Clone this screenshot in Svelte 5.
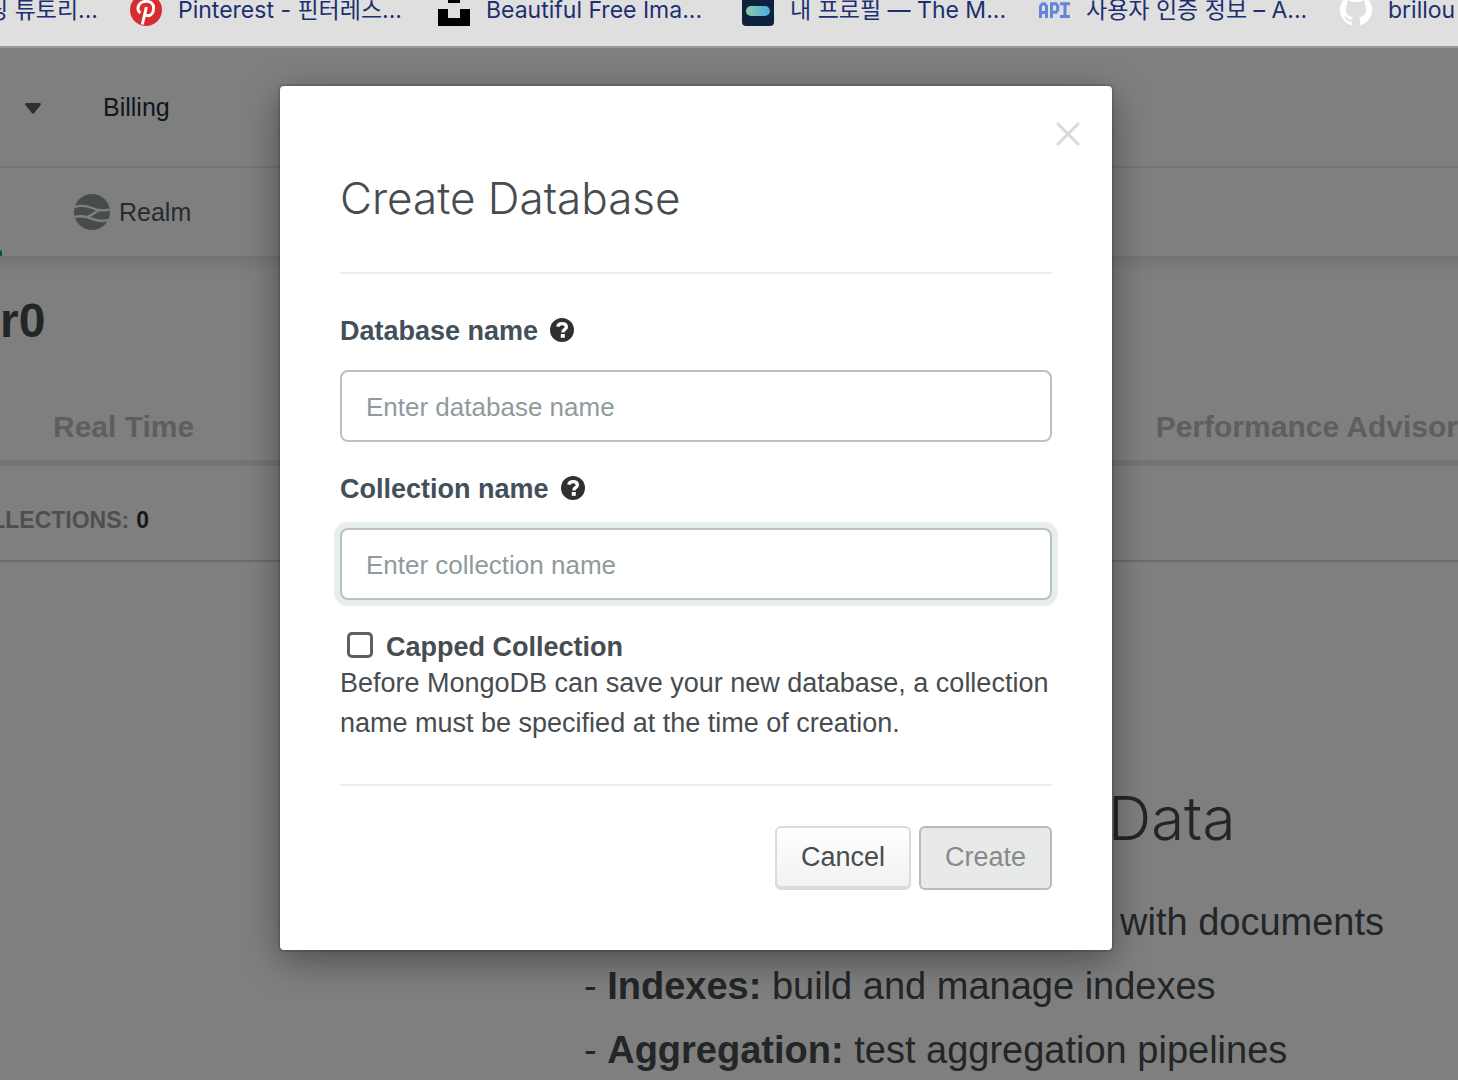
<script>
  let databaseName = $state('');
  let collectionName = $state('');
  let capped = $state(false);
</script>

{#snippet help(label)}
  <button class="help" type="button" aria-label={label}>
    <svg viewBox="0 0 24 24" width="24" height="24" aria-hidden="true">
      <circle cx="12" cy="12" r="12" fill="#2f3131" />
      <path d="M7.700 8.600C8.200 6.600 9.600 5.600 12 5.600c2.800 0 4.300 1.300 4.300 3.300 0 1.500-.8 2.200-1.900 2.900-1 .6-1.500 1-1.500 2.600" fill="none" stroke="#fff" stroke-width="3.400" />
      <rect x="10.800" y="16" width="4" height="3.800" fill="#fff" />
    </svg>
  </button>
{/snippet}

<div class="window">
  <nav class="bookmarks" aria-label="Bookmarks">
    <a class="bookmark tail" href="#tutorial"><span>딩 튜토리...</span></a>
    <a class="bookmark" href="#pinterest">
      <svg viewBox="0 0 32 32" width="32" height="32" aria-hidden="true">
        <circle cx="16" cy="16" r="16" fill="#d82c30" />
        <path d="M10.200 19.100C7.800 16.800 7.400 13.600 9 10.900c1.500-2.500 4.300-3.600 7.200-3.600 4.500 0 7.400 2.800 7.400 6.700 0 4.600-2.500 7.700-5.700 7.700-1.700 0-3-1.100-3-2.600M16.400 13 12.300 30.500" fill="none" stroke="#fff" stroke-width="3" />
      </svg>
      <span>Pinterest - 핀터레스...</span>
    </a>
    <a class="bookmark" href="#images">
      <svg viewBox="0 0 32 32" width="32" height="32" aria-hidden="true">
        <path d="M10 0h12v9H10zM0 15h10v9h12v-9h10v17H0z" fill="#000" />
      </svg>
      <span>Beautiful Free Ima...</span>
    </a>
    <a class="bookmark" href="#profile">
      <svg viewBox="0 0 32 32" width="32" height="32" aria-hidden="true">
        <defs>
          <linearGradient id="pill">
            <stop offset="0" stop-color="#8fcba6" />
            <stop offset="1" stop-color="#42ade0" />
          </linearGradient>
        </defs>
        <rect width="32" height="32" rx="4" fill="#0d233d" />
        <rect x="4" y="12" width="24" height="10" rx="5" fill="url(#pill)" />
      </svg>
      <span>내 프로필 — The M...</span>
    </a>
    <a class="bookmark" href="#credentials">
      <svg viewBox="0 0 32 32" width="32" height="32" aria-hidden="true">
        <g fill="none" stroke="#6485dc" stroke-width="3">
          <path d="M2.500 24V12l2-2.300h2L8.500 12v12M2.500 18.500h6" />
          <path d="M13.500 24V9.700h4.500L19.700 12v4L18 18.300h-4.500" />
          <path d="M22 9.700h10M27 9.700v12.800M22 22.500h10" />
        </g>
      </svg>
      <span>사용자 인증 정보 – A...</span>
    </a>
    <a class="bookmark" href="#brillout">
      <svg viewBox="0 0 16 16" width="32" height="32" aria-hidden="true">
        <path fill="#fff" d="M8 0C3.580 0 0 3.580 0 8c0 3.540 2.290 6.530 5.470 7.590.4.070.55-.17.55-.38 0-.19-.01-.82-.01-1.490-2.010.37-2.530-.49-2.690-.94-.09-.23-.48-.94-.82-1.130-.28-.15-.68-.52-.01-.53.63-.01 1.080.58 1.230.82.72 1.210 1.870.87 2.330.66.070-.52.28-.87.51-1.070-1.780-.2-3.640-.89-3.640-3.950 0-.87.31-1.590.82-2.150-.08-.2-.36-1.020.08-2.120 0 0 .67-.21 2.200.82.64-.18 1.320-.27 2-.27s1.360.09 2 .27c1.530-1.040 2.200-.82 2.200-.82.44 1.100.16 1.920.08 2.120.51.56.82 1.270.82 2.150 0 3.070-1.870 3.750-3.650 3.950.29.25.54.73.54 1.480 0 1.070-.01 1.930-.01 2.200 0 .21.15.46.55.38A8.010 8.010 0 0 0 16 8c0-4.420-3.580-8-8-8z" />
      </svg>
      <span>brillou</span>
    </a>
  </nav>

  <div class="viewport">
    <div class="page">
      <header class="top">
        <button class="caret" type="button" aria-label="Switch context">
          <svg viewBox="0 0 16 11" width="16" height="11" aria-hidden="true">
            <path d="M1.200 0h13.600q1.600.4.800 2L9 10.200q-1 1-2 0L.4 2Q-.4.400 1.200 0z" fill="#576066" />
          </svg>
        </button>
        <a href="#billing">Billing</a>
      </header>

      <nav class="services" aria-label="Services">
        <span class="active-mark"></span>
        <a href="#realm">
          <svg viewBox="0 0 36 36" width="36" height="36" aria-hidden="true">
            <clipPath id="disc"><circle cx="18" cy="18" r="18" /></clipPath>
            <g clip-path="url(#disc)">
              <rect width="36" height="36" fill="#8c9899" />
              <g fill="none" stroke="#fff" stroke-width="2.400">
                <path d="M-1 13.500C6 11 12 11.500 18 14s12 3.500 20 1" />
                <path d="M-1 23.500c7-2.500 12-1.500 18 .8s11 3.700 20 1.200" />
                <path d="M14 22.500c5-1 6.500-5.500 13-6.700" />
              </g>
            </g>
          </svg>
          <span>Realm</span>
        </a>
      </nav>

      <h1 class="cluster"><span>r0</span></h1>

      <nav class="tabs" aria-label="Cluster views">
        <a href="#real-time">Real Time</a>
        <a href="#advisor">Performance Advisor</a>
      </nav>

      <div class="stats"><p>LLECTIONS: <b>0</b></p></div>

      <main class="explore">
        <h2>Data</h2>
        <ul>
          <li class="first">with documents</li>
          <li>- <b>Indexes:</b> build and manage indexes</li>
          <li>- <b>Aggregation:</b> test aggregation pipelines</li>
        </ul>
      </main>
    </div>

    <div class="overlay">
      <div class="modal" role="dialog" aria-modal="true" aria-labelledby="dialog-title">
        <button class="close" type="button" aria-label="Close">
          <svg viewBox="0 0 24 24" width="24" height="24" aria-hidden="true">
            <path d="M1 1l22 22M23 1L1 23" stroke="#d8dad9" stroke-width="3" />
          </svg>
        </button>
        <h2 id="dialog-title">Create Database</h2>
        <form>
          <div class="fields">
            <div class="field">
              <div class="label-row">
                <label for="database">Database name</label>
                {@render help('About database names')}
              </div>
              <input id="database" type="text" placeholder="Enter database name" bind:value={databaseName} />
            </div>
            <div class="field">
              <div class="label-row">
                <label for="collection">Collection name</label>
                {@render help('About collection names')}
              </div>
              <input id="collection" class="focused" type="text" placeholder="Enter collection name" bind:value={collectionName} />
            </div>
            <div>
              <label class="check">
                <input type="checkbox" bind:checked={capped} />
                <span>Capped Collection</span>
              </label>
              <p>Before MongoDB can save your new database, a collection name must be specified at the time of creation.</p>
            </div>
          </div>
          <div class="actions">
            <button class="cancel" type="button">Cancel</button>
            <button class="create" type="submit" disabled>Create</button>
          </div>
        </form>
      </div>
    </div>
  </div>
</div>

<style>
  :global(body) {
    margin: 0;
  }

  .window,
  .window :global(*) {
    box-sizing: border-box;
  }

  .window {
    display: flex;
    flex-direction: column;
    height: 100vh;
    overflow: hidden;
    font-family: "Liberation Sans", Arial, sans-serif;
    color: #464c4f;
  }

  a {
    color: inherit;
    text-decoration: none;
  }

  h1,
  h2,
  p,
  ul {
    margin: 0;
    padding: 0;
  }

  button {
    font: inherit;
    cursor: pointer;
  }

  svg {
    display: block;
    flex: none;
  }

  .bookmarks {
    flex: none;
    display: grid;
    grid-template-columns: 130px 308px 304px 296px 302px 1fr;
    align-content: end;
    height: 48px;
    padding-bottom: 20px;
    overflow: hidden;
    background: #dfdfdf;
    border-bottom: 2px solid #999b9b;
    font: 23px/32px Inter, "Noto Sans CJK KR", sans-serif;
    color: #1c2f70;
  }

  .bookmark {
    display: flex;
    align-items: center;
    gap: 16px;
    height: 32px;
    white-space: nowrap;
  }

  .tail {
    justify-content: flex-end;
    padding-right: 32px;
  }

  .viewport {
    position: relative;
    flex: 1;
    min-height: 0;
    overflow: hidden;
  }

  .page {
    background: #fff;
  }

  .top {
    display: flex;
    align-items: center;
    gap: 62px;
    height: 120px;
    padding-left: 25px;
    border-bottom: 2px solid #e8eded;
    font-size: 25px;
    color: #21313c;
  }

  .caret {
    padding: 2px 0 0;
    border: 0;
    background: none;
  }

  .services {
    display: flex;
    align-items: stretch;
    gap: 72px;
    height: 88px;
    font-size: 25px;
    color: #4d575e;
  }

  .services a {
    display: flex;
    align-items: center;
    gap: 9px;
  }

  .active-mark {
    align-self: flex-end;
    width: 2px;
    height: 6px;
    border-top-right-radius: 2px;
    background: #13aa52;
  }

  .cluster {
    display: flex;
    padding-top: 35px;
    background: linear-gradient(#e6e8ec, #f6f7f8 12px, #fff 24px);
    font-size: 48px;
    line-height: 60px;
  }

  .tabs {
    display: flex;
    justify-content: space-between;
    height: 115px;
    padding: 58px 0 0 53px;
    border-bottom: 6px solid #e7e8e7;
    font-size: 30px;
    line-height: 36px;
    font-weight: bold;
    color: #babebc;
  }

  .stats {
    display: flex;
    align-items: center;
    height: 96px;
    padding-top: 14px;
    border-bottom: 2px solid #d5d8d7;
    font-size: 23px;
    font-weight: bold;
    color: #9d9f9e;
  }

  .stats p {
    display: flex;
    justify-content: flex-end;
    gap: 7px;
    width: 149px;
    white-space: nowrap;
  }

  .stats b {
    color: #303332;
  }

  .explore {
    padding: 216px 0 0 584px;
    font-size: 38px;
    line-height: 64px;
    white-space: nowrap;
  }

  .explore h2 {
    padding-left: 524px;
    font: 300 60px/80px Inter, sans-serif;
  }

  .explore ul {
    padding-top: 32px;
    list-style: none;
  }

  .explore .first {
    padding-left: 536px;
  }

  .overlay {
    position: absolute;
    inset: 0;
    display: flex;
    justify-content: center;
    align-items: flex-start;
    padding: 38px 66px 0 0;
    background: rgba(0, 0, 0, 0.5);
  }

  .modal {
    position: relative;
    flex: 0 1 832px;
    padding: 82px 60px 60px;
    border-radius: 4px;
    background: #fff;
    box-shadow: 0 0 0 2px rgba(0, 0, 0, 0.12), 0 10px 36px rgba(0, 0, 0, 0.4);
    font-size: 27px;
    line-height: 40px;
  }

  .modal h2 {
    padding-bottom: 44px;
    border-bottom: 2px solid #ededed;
    font: 300 44px/60px Inter, sans-serif;
  }

  .close {
    position: absolute;
    top: 36px;
    right: 32px;
    padding: 0;
    border: 0;
    background: none;
  }

  .fields {
    display: flex;
    flex-direction: column;
    gap: 27px;
    padding: 37px 0 41px;
    border-bottom: 2px solid #ededed;
  }

  .field {
    display: flex;
    flex-direction: column;
    gap: 19px;
  }

  .label-row {
    display: flex;
    align-items: center;
    gap: 12px;
    font-weight: bold;
    color: #42505a;
  }

  .help {
    padding: 0 0 2px;
    border: 0;
    background: none;
  }

  input[type="text"] {
    width: 100%;
    height: 72px;
    padding: 2px 24px 0;
    border: 2px solid #b8c4c2;
    border-radius: 8px;
    outline: none;
    background: #fff;
    font: inherit;
    font-size: 26px;
    color: #464c4f;
  }

  input[type="text"]::placeholder {
    color: #8f9b9b;
    opacity: 1;
  }

  input.focused {
    box-shadow: 0 0 0 6px #e7eeec;
  }

  .check {
    display: flex;
    align-items: center;
    gap: 13px;
    height: 36px;
    padding-left: 7px;
    font-weight: bold;
  }

  .check span {
    padding-top: 4px;
  }

  input[type="checkbox"] {
    appearance: none;
    width: 26px;
    height: 26px;
    margin: 0;
    border: 3px solid #5c6062;
    border-radius: 5px;
    background: #fff;
  }

  .actions {
    display: flex;
    justify-content: flex-end;
    gap: 8px;
    padding-top: 40px;
  }

  .actions button {
    height: 64px;
    padding: 0 24px 2px;
    border: 2px solid #d7dbda;
    border-radius: 6px;
    line-height: 56px;
  }

  .cancel {
    background: linear-gradient(#fff, #f1f1f1);
    box-shadow: inset 0 -2px #d7dbda;
    color: #464c4f;
  }

  .actions .create {
    border-color: #b9bbba;
    background: #e8eae9;
    color: #88898c;
  }
</style>
